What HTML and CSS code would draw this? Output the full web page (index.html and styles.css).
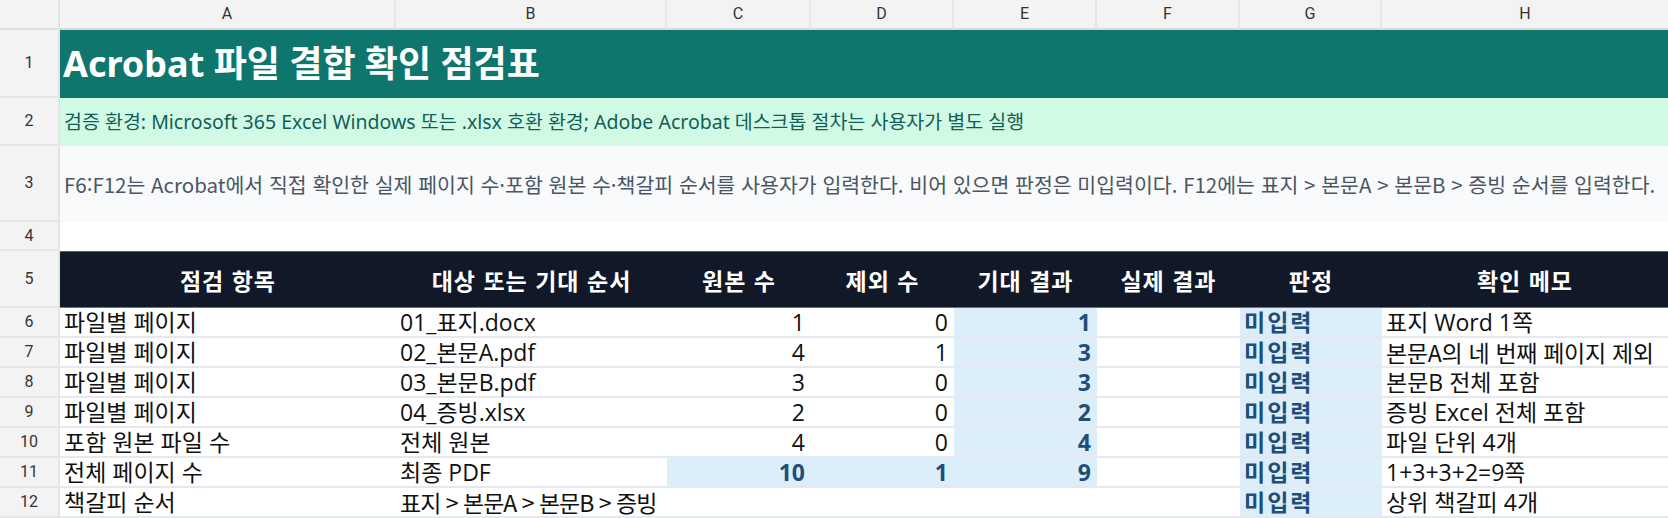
FILE: index.html
```html
<!DOCTYPE html>
<html lang="ko">
<head>
<meta charset="utf-8">
<title>Acrobat 파일 결합 확인 점검표</title>
<link rel="stylesheet" href="styles.css">
</head>
<body>
<div class="sheet">
  <div class="corner"></div>
  <div class="colh">A</div>
  <div class="colh">B</div>
  <div class="colh">C</div>
  <div class="colh">D</div>
  <div class="colh">E</div>
  <div class="colh">F</div>
  <div class="colh">G</div>
  <div class="colh last">H</div>

  <div class="rowh">1</div>
  <div class="title">Acrobat 파일 결합 확인 점검표</div>

  <div class="rowh">2</div>
  <div class="env">검증 환경: Microsoft 365 Excel Windows 또는 .xlsx 호환 환경; Adobe Acrobat 데스크톱 절차는 사용자가 별도 실행</div>

  <div class="rowh">3</div>
  <div class="note">F6:F12는 Acrobat에서 직접 확인한 실제 페이지 수·포함 원본 수·책갈피 순서를 사용자가 입력한다. 비어 있으면 판정은 미입력이다. F12에는 표지 &gt; 본문A &gt; 본문B &gt; 증빙 순서를 입력한다.</div>

  <div class="rowh">4</div>
  <div class="blank"></div>

  <div class="rowh">5</div>
  <div class="th">점검 항목</div>
  <div class="th">대상 또는 기대 순서</div>
  <div class="th">원본 수</div>
  <div class="th">제외 수</div>
  <div class="th">기대 결과</div>
  <div class="th">실제 결과</div>
  <div class="th">판정</div>
  <div class="th">확인 메모</div>

  <div class="rowh">6</div>
  <div class="cell">파일별 페이지</div>
  <div class="cell">01_표지.docx</div>
  <div class="cell num">1</div>
  <div class="cell num">0</div>
  <div class="cell num calc">1</div>
  <div class="cell"></div>
  <div class="cell judge">미입력</div>
  <div class="cell">표지 Word 1쪽</div>

  <div class="rowh">7</div>
  <div class="cell">파일별 페이지</div>
  <div class="cell">02_본문A.pdf</div>
  <div class="cell num">4</div>
  <div class="cell num">1</div>
  <div class="cell num calc">3</div>
  <div class="cell"></div>
  <div class="cell judge">미입력</div>
  <div class="cell tight">본문A의 네 번째 페이지 제외</div>

  <div class="rowh">8</div>
  <div class="cell">파일별 페이지</div>
  <div class="cell">03_본문B.pdf</div>
  <div class="cell num">3</div>
  <div class="cell num">0</div>
  <div class="cell num calc">3</div>
  <div class="cell"></div>
  <div class="cell judge">미입력</div>
  <div class="cell">본문B 전체 포함</div>

  <div class="rowh">9</div>
  <div class="cell">파일별 페이지</div>
  <div class="cell">04_증빙.xlsx</div>
  <div class="cell num">2</div>
  <div class="cell num">0</div>
  <div class="cell num calc">2</div>
  <div class="cell"></div>
  <div class="cell judge">미입력</div>
  <div class="cell">증빙 Excel 전체 포함</div>

  <div class="rowh">10</div>
  <div class="cell">포함 원본 파일 수</div>
  <div class="cell">전체 원본</div>
  <div class="cell num">4</div>
  <div class="cell num">0</div>
  <div class="cell num calc">4</div>
  <div class="cell"></div>
  <div class="cell judge">미입력</div>
  <div class="cell">파일 단위 4개</div>

  <div class="rowh">11</div>
  <div class="cell">전체 페이지 수</div>
  <div class="cell">최종 PDF</div>
  <div class="cell num calc">10</div>
  <div class="cell num calc">1</div>
  <div class="cell num calc">9</div>
  <div class="cell"></div>
  <div class="cell judge">미입력</div>
  <div class="cell">1+3+3+2=9쪽</div>

  <div class="rowh">12</div>
  <div class="cell">책갈피 순서</div>
  <div class="cell tighter">표지 &gt; 본문A &gt; 본문B &gt; 증빙</div>
  <div class="cell num"></div>
  <div class="cell num"></div>
  <div class="cell num"></div>
  <div class="cell"></div>
  <div class="cell judge">미입력</div>
  <div class="cell">상위 책갈피 4개</div>
</div>
</body>
</html>
```

FILE: styles.css
```css
* { box-sizing: border-box; }

html, body {
  margin: 0;
  padding: 0;
  background: #ffffff;
}

body {
  width: 1668px;
  height: 518px;
  overflow: hidden;
  font-family: "Noto Sans CJK KR", "Noto Sans", sans-serif;
}

.sheet {
  display: grid;
  grid-template-columns: 60px 336px 271px 144px 143px 143px 143px 142px 286px;
  grid-template-rows: 30px 68px 48px 76px 29px 57px repeat(7, 30px);
  width: 1668px;
}

.corner {
  background: #f3f3f3;
  border-right: 2px solid #e4e4e4;
  border-bottom: 2px solid #e0e0e0;
}

.colh {
  background: #f3f3f3;
  border-right: 2px solid #e6e6e6;
  border-bottom: 2px solid #dadada;
  display: flex;
  align-items: center;
  justify-content: center;
  font-family: Roboto, "Liberation Sans", Arial, sans-serif;
  font-size: 16px;
  line-height: 20px;
  color: #333333;
}

.colh.last { border-right: none; }

.rowh {
  grid-column: 1;
  background: #f3f3f3;
  border-right: 2px solid #e4e4e4;
  border-bottom: 2px solid #e6e6e6;
  display: flex;
  align-items: center;
  justify-content: center;
  font-family: Roboto, "Liberation Sans", Arial, sans-serif;
  font-size: 16px;
  line-height: 20px;
  color: #333333;
}

.title {
  grid-column: 2 / -1;
  background: #0f766e;
  color: #ffffff;
  font-family: "Noto Sans", "Noto Sans CJK KR", sans-serif;
  font-weight: 700;
  font-size: 36px;
  line-height: 46px;
  display: flex;
  align-items: center;
  padding-left: 3px;
  white-space: nowrap;
}

.env {
  grid-column: 2 / -1;
  background: #d1fae5;
  color: #115e59;
  font-family: "Noto Sans", "Noto Sans CJK KR", sans-serif;
  font-size: 19.5px;
  line-height: 26px;
  display: flex;
  align-items: center;
  padding-left: 4px;
  white-space: nowrap;
}

.note {
  grid-column: 2 / -1;
  background: #f8fafc;
  color: #4b5563;
  font-size: 20.5px;
  line-height: 28px;
  display: flex;
  align-items: center;
  padding-left: 4px;
  white-space: nowrap;
}

.blank {
  grid-column: 2 / -1;
  background: #ffffff;
}

.th {
  background: #111827;
  color: #ffffff;
  font-weight: 700;
  font-size: 23px;
  line-height: 28px;
  letter-spacing: 1px;
  display: flex;
  align-items: center;
  justify-content: center;
  border-top: 1px solid #5b6472;
  border-bottom: 1px solid #6b7280;
  white-space: nowrap;
}

.cell {
  background: #ffffff;
  color: #111111;
  font-family: "Open Sans", "Noto Sans CJK KR", sans-serif;
  font-size: 23px;
  line-height: 26px;
  display: flex;
  align-items: center;
  padding: 0 4px;
  border-bottom: 2px solid #e5e9ef;
  white-space: nowrap;
}

.cell.tight {
  font-family: "Noto Sans CJK KR", sans-serif;
  letter-spacing: -0.3px;
}
.cell.tighter {
  font-family: "Noto Sans CJK KR", sans-serif;
  letter-spacing: -1px;
}

.cell.num { justify-content: flex-end; padding-right: 6px; }

.cell.calc {
  background: #ddeefb;
  color: #1f4e79;
  font-weight: 700;
}

.cell.judge {
  background: #ddeefb;
  color: #1f4e79;
  font-family: "Open Sans", "Noto Sans CJK KR", sans-serif;
  font-weight: 700;
  letter-spacing: 2px;
}
```
